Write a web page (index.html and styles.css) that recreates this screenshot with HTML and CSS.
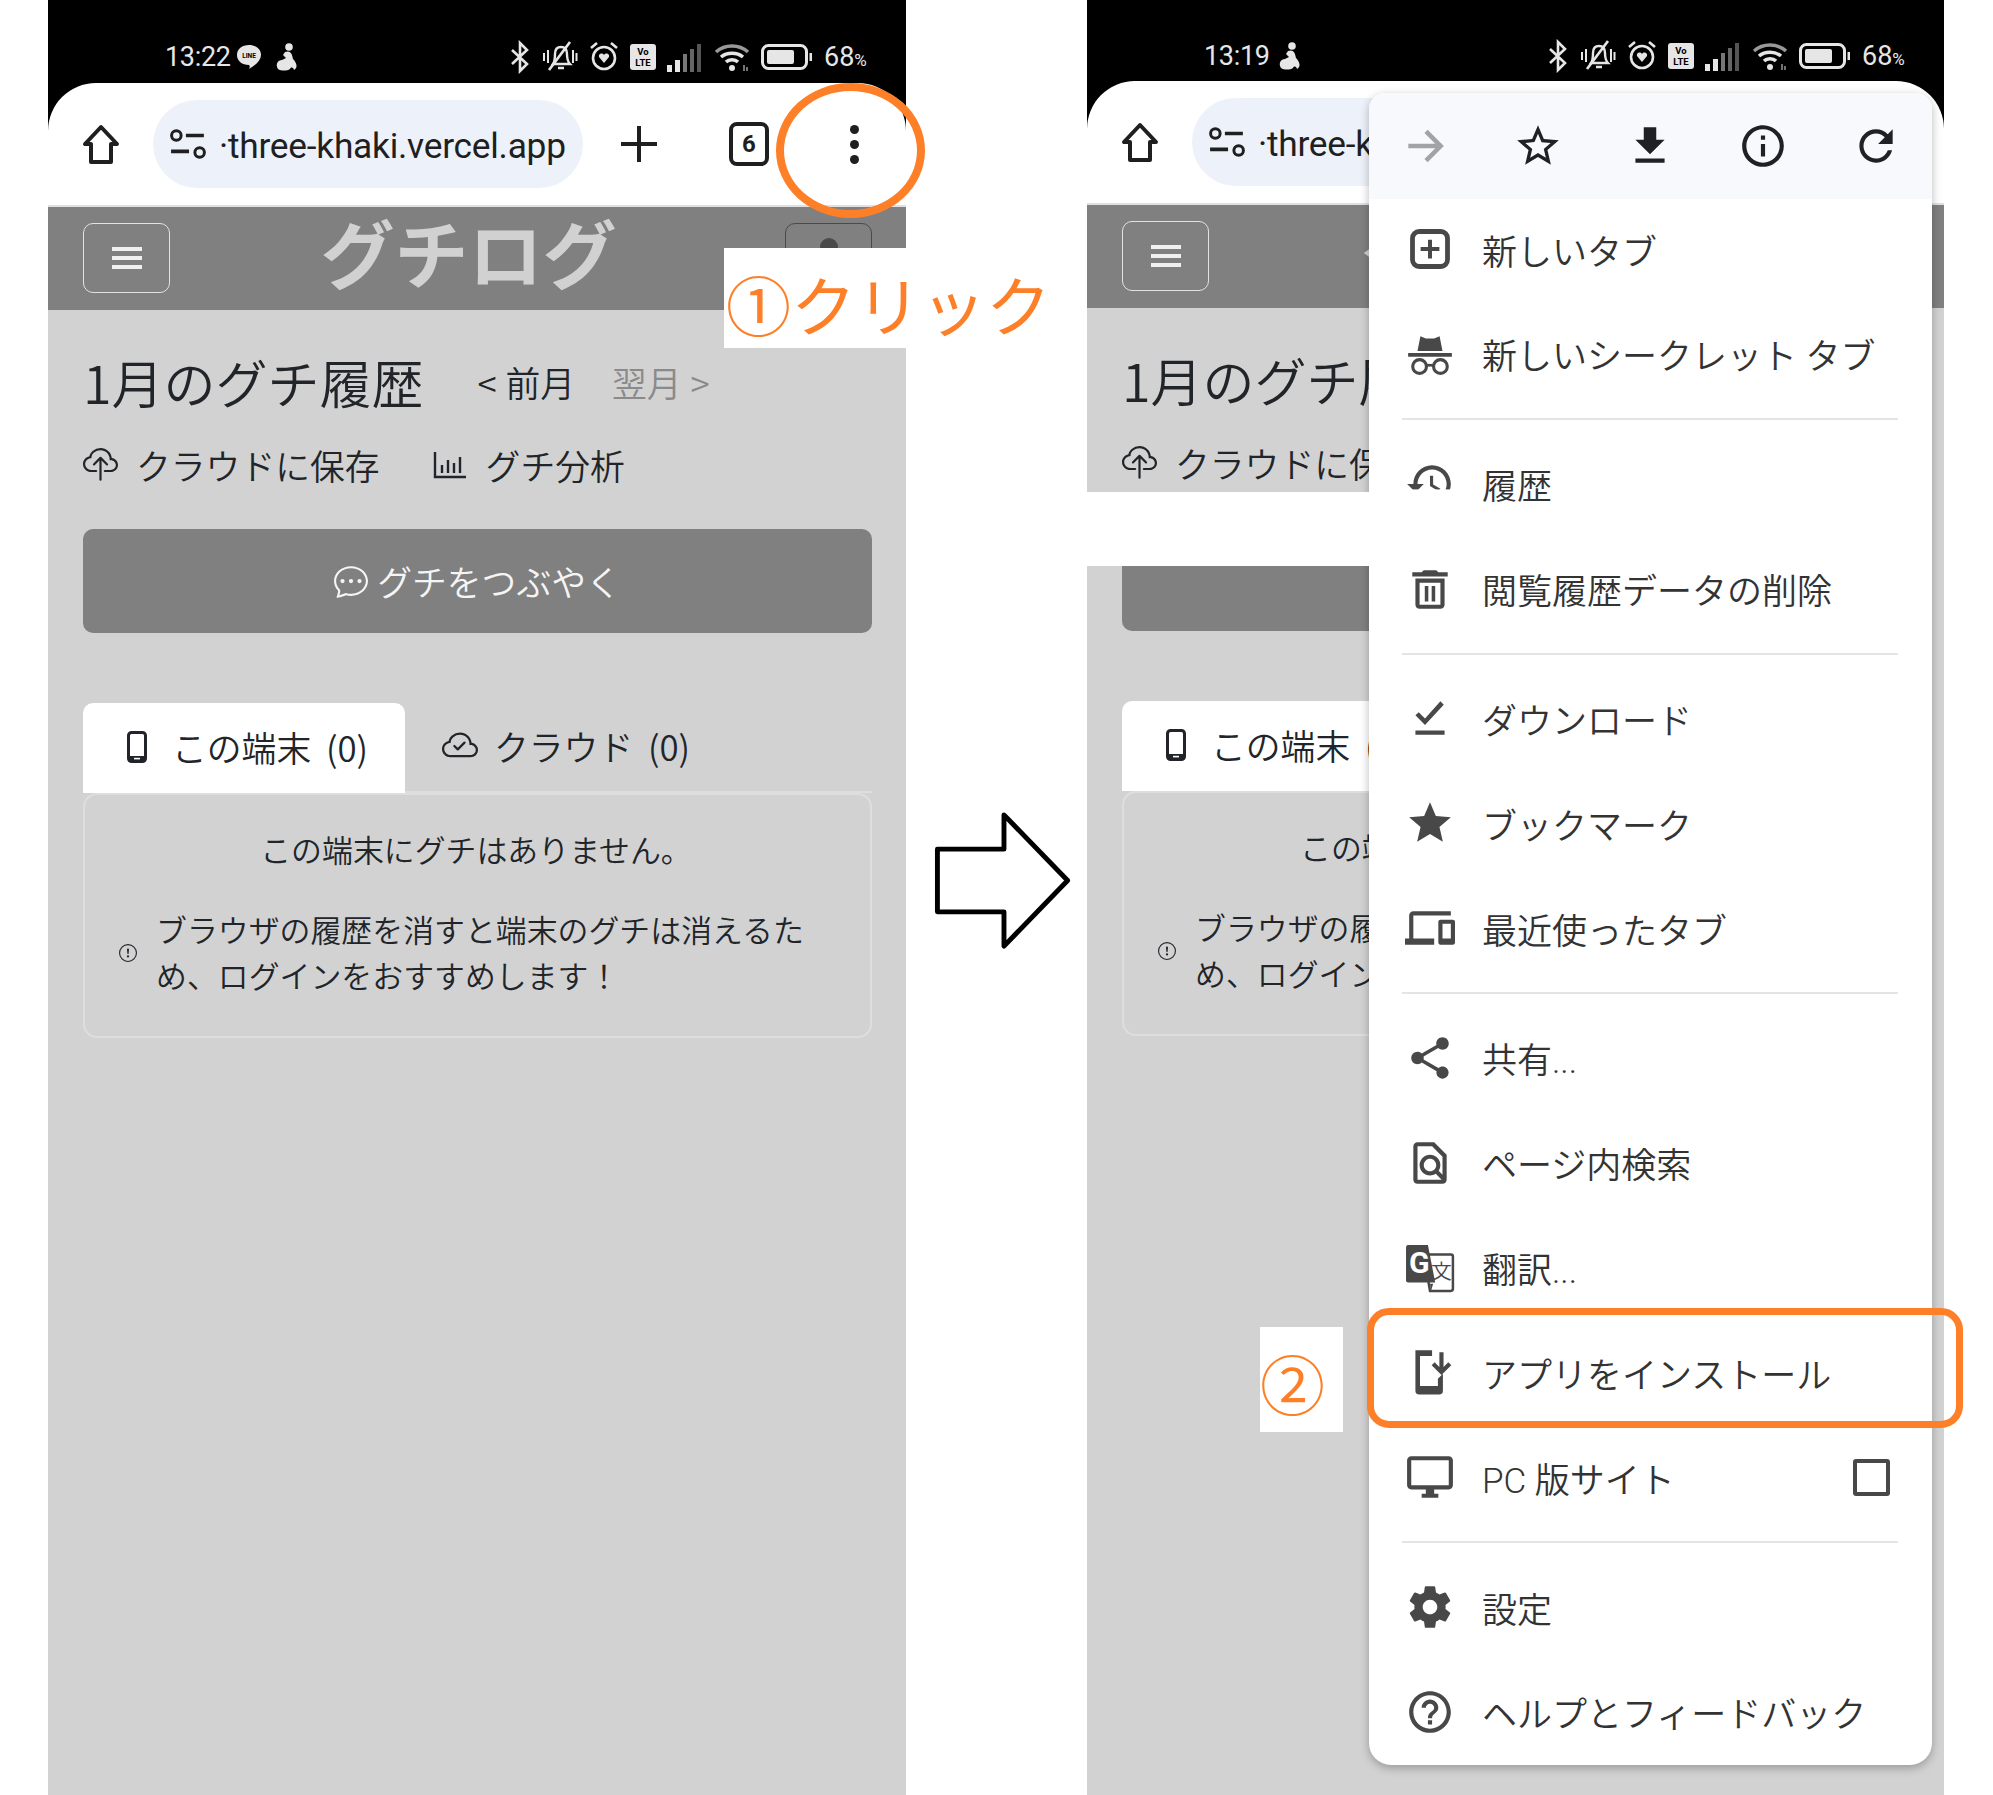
FILE: index.html
```html
<!DOCTYPE html>
<html lang="ja">
    <head>
        <meta charset="UTF-8" />
        <title>グチログ インストール手順</title>
        <link rel="stylesheet" href="styles.css">
    </head>
    <body>
        <svg class="defs" xmlns="http://www.w3.org/2000/svg">
            <!-- status bar -->
            <symbol id="s-bt" viewBox="0 0 22 34"><path d="M3 10l15 14-7 7V3l7 7L3 24" fill="none" stroke="currentColor" stroke-width="2.6"/></symbol>
            <symbol id="s-bell" viewBox="0 0 36 34"><path d="M11 24c2-3 2-6 2-10 0-4 2-7 6-7s6 3 6 7c0 4 0 7 3 10zM16 28h6" fill="none" stroke="currentColor" stroke-width="2.4"/><path d="M7 30L28 2" stroke="currentColor" stroke-width="2.6"/><path d="M2 13v8M6 10v13M31 10v13M34.500 13v8" stroke="currentColor" stroke-width="2"/></symbol>
            <symbol id="s-alarm" viewBox="0 0 30 34"><circle cx="15" cy="18" r="11" fill="none" stroke="currentColor" stroke-width="2.6"/><path d="M2 8l6-5M28 8l-6-5" stroke="currentColor" stroke-width="2.6"/><path d="M15 23l-5-6c-1-3 3-5 5-2 2-3 6-1 5 2z" fill="currentColor"/></symbol>
            <symbol id="s-signal" viewBox="0 0 36 30"><rect x="0" y="23" width="5" height="7" fill="currentColor"/><rect x="8" y="18" width="5" height="12" fill="currentColor"/><rect x="16" y="12" width="4" height="18" fill="#777"/><rect x="23" y="7" width="4" height="23" fill="#666"/><rect x="30" y="2" width="4" height="28" fill="#555"/></symbol>
            <symbol id="s-wifi" viewBox="0 0 36 30"><path d="M2 10c9-8 23-8 32 0" fill="none" stroke="#999" stroke-width="3.500"/><path d="M7 15c6-5 16-5 22 0M12 20c3-3 9-3 12 0" fill="none" stroke="currentColor" stroke-width="3.500"/><circle cx="18" cy="26" r="3" fill="currentColor"/><path d="M30 23v6M33 25v4" stroke="#999" stroke-width="1.500"/></symbol>
            <symbol id="s-batt" viewBox="0 0 52 26"><rect x="1.500" y="1.500" width="44" height="23" rx="6" fill="none" stroke="currentColor" stroke-width="3"/><rect x="6" y="6" width="27" height="14" rx="2" fill="currentColor"/><rect x="48.500" y="9" width="2.500" height="8" fill="currentColor"/></symbol>
            <symbol id="s-figure" viewBox="0 0 24 30"><circle cx="14" cy="5" r="3.800" fill="currentColor"/><path d="M10 10c5-2 7 1 8 7 4 4 5 9 1 11-1-3-3-3-4-1-3 2-9 2-12 0-3-5 0-9 4-9l4-2-3-3z" fill="currentColor"/></symbol>
            <!-- toolbar -->
            <symbol id="t-home" viewBox="0 0 38 40"><path d="M19 3L3 20h6v18h20V20h6z" fill="none" stroke="currentColor" stroke-width="4" stroke-linejoin="round"/></symbol>
            <symbol id="t-tune" viewBox="0 0 34 28"><circle cx="6" cy="6" r="4.500" fill="none" stroke="currentColor" stroke-width="2.800"/><path d="M15 6h17M1 21h17" stroke="currentColor" stroke-width="3.400"/><circle cx="28" cy="22" r="4.500" fill="none" stroke="currentColor" stroke-width="2.800"/></symbol>
            <!-- page -->
            <symbol id="p-menu" viewBox="0 0 30 24"><path d="M0 3h30M0 12h30M0 21h30" stroke="currentColor" stroke-width="4"/></symbol>
            <symbol id="p-person" viewBox="0 0 40 50"><circle cx="20" cy="14" r="9" fill="currentColor"/><path d="M4 46c0-12 8-18 16-18s16 6 16 18z" fill="currentColor"/></symbol>
            <symbol id="p-upload" viewBox="0 0 16 16"><path d="M4.406 1.342A5.53 5.53 0 0 1 8 0c2.69 0 4.923 2 5.166 4.579C14.758 4.804 16 6.137 16 7.773 16 9.569 14.502 11 12.687 11H10a.5.5 0 0 1 0-1h2.688C13.979 10 15 8.988 15 7.773c0-1.216-1.02-2.228-2.313-2.228h-.5v-.5C12.188 2.825 10.328 1 8 1a4.53 4.53 0 0 0-2.941 1.1c-.757.652-1.153 1.438-1.153 2.055v.448l-.445.049C2.064 4.805 1 5.952 1 7.318 1 8.785 2.23 10 3.781 10H6a.5.5 0 0 1 0 1H3.781C1.708 11 0 9.366 0 7.318c0-1.763 1.266-3.223 2.942-3.593.143-.863.698-1.723 1.464-2.383z" fill="currentColor"/><path d="M7.646 4.146a.5.5 0 0 1 .708 0l3 3a.5.5 0 0 1-.708.708L8.500 5.707V14.500a.5.5 0 0 1-1 0V5.707L5.354 7.854a.5.5 0 1 1-.708-.708l3-3z" fill="currentColor"/></symbol>
            <symbol id="p-chart" viewBox="0 0 34 28"><path d="M2 1v25h31" fill="none" stroke="currentColor" stroke-width="2.400"/><path d="M9 14v8M15 9v13M21 12v10M27 6v16" stroke="currentColor" stroke-width="2.400"/></symbol>
            <symbol id="p-chat" viewBox="0 0 16 16"><path d="M5 8a1 1 0 1 1-2 0 1 1 0 0 1 2 0zm4 0a1 1 0 1 1-2 0 1 1 0 0 1 2 0zm3 1a1 1 0 1 0 0-2 1 1 0 0 0 0 2z" fill="currentColor"/><path d="m2.165 15.803.02-.004c1.830-.363 2.948-.842 3.468-1.105A9.060 9.060 0 0 0 8 15c4.418 0 8-3.134 8-7s-3.582-7-8-7-8 3.134-8 7c0 1.760.743 3.370 1.970 4.600a10.437 10.437 0 0 1-.524 2.318l-.003.011a10.722 10.722 0 0 1-.244.637c-.079.186.074.394.273.362a21.673 21.673 0 0 0 .693-.125zm.8-3.108a1 1 0 0 0-.287-.801C1.618 10.830 1 9.468 1 8c0-3.192 3.004-6 7-6s7 2.808 7 6c0 3.193-3.004 6-7 6a8.060 8.060 0 0 1-2.088-.272 1 1 0 0 0-.711.074c-.387.196-1.240.570-2.634.893a10.970 10.970 0 0 0 .398-2z" fill="currentColor"/></symbol>
            <symbol id="p-phone" viewBox="0 0 20 32"><rect x="1.500" y="1.500" width="17" height="29" rx="3" fill="none" stroke="currentColor" stroke-width="3"/><rect x="1.500" y="25" width="17" height="5.500" fill="currentColor"/><rect x="7" y="26.800" width="6" height="1.600" fill="#fff"/></symbol>
            <symbol id="p-cloud" viewBox="0 0 16 16"><path d="M4.406 3.342A5.530 5.530 0 0 1 8 2c2.690 0 4.923 2 5.166 4.579C14.758 6.804 16 8.137 16 9.773 16 11.569 14.502 13 12.687 13H3.781C1.708 13 0 11.366 0 9.318c0-1.763 1.266-3.223 2.942-3.593.143-.863.698-1.723 1.464-2.383zm.653.757c-.757.653-1.153 1.440-1.153 2.056v.448l-.445.049C2.064 6.805 1 7.952 1 9.318 1 10.785 2.230 12 3.781 12h8.906C13.980 12 15 10.988 15 9.773c0-1.216-1.020-2.228-2.313-2.228h-.5v-.5C12.188 4.825 10.328 3 8 3a4.530 4.530 0 0 0-2.941 1.100z" fill="currentColor"/><path d="M10.354 6.146a.5.5 0 0 1 0 .708l-3 3a.5.5 0 0 1-.708 0l-1.500-1.500a.5.5 0 1 1 .708-.708L7 8.793l2.646-2.647a.5.5 0 0 1 .708 0z" fill="currentColor"/></symbol>
            <symbol id="p-alert" viewBox="0 0 16 16"><path d="M8 15A7 7 0 1 1 8 1a7 7 0 0 1 0 14zm0 1A8 8 0 1 0 8 0a8 8 0 0 0 0 16z" fill="currentColor"/><path d="M7.002 11a1 1 0 1 1 2 0 1 1 0 0 1-2 0zM7.100 4.995a.905.905 0 1 1 1.800 0l-.350 3.507a.552.552 0 0 1-1.100 0L7.100 4.995z" fill="currentColor"/></symbol>
            <!-- chrome menu -->
            <symbol id="m-forward" viewBox="0 0 24 24"><path d="M4 12h15M12.500 5l7 7-7 7" fill="none" stroke="currentColor" stroke-width="2.200"/></symbol>
            <symbol id="m-star-o" viewBox="0 0 24 24"><path d="M22 9.240l-7.190-.62L12 2 9.190 8.630 2 9.240l5.460 4.730L5.820 21 12 17.270 18.180 21l-1.630-7.030L22 9.240zM12 15.400l-3.760 2.270 1-4.280-3.320-2.880 4.380-.38L12 6.100l1.710 4.040 4.380.38-3.320 2.880 1 4.280L12 15.400z" fill="currentColor"/></symbol>
            <symbol id="m-download" viewBox="0 0 24 24"><path d="M19 9h-4V3H9v6H5l7 7 7-7zM5 18v2h14v-2H5z" fill="currentColor"/></symbol>
            <symbol id="m-info" viewBox="0 0 24 24"><path d="M11 7h2v2h-2zm0 4h2v6h-2zm1-9C6.480 2 2 6.480 2 12s4.480 10 10 10 10-4.480 10-10S17.520 2 12 2zm0 18c-4.410 0-8-3.590-8-8s3.590-8 8-8 8 3.590 8 8-3.590 8-8 8z" fill="currentColor"/></symbol>
            <symbol id="m-refresh" viewBox="0 0 24 24"><path d="M17.650 6.350C16.200 4.900 14.210 4 12 4c-4.420 0-7.990 3.580-7.990 8s3.570 8 7.990 8c3.730 0 6.840-2.550 7.730-6h-2.080c-.82 2.330-3.040 4-5.650 4-3.310 0-6-2.690-6-6s2.690-6 6-6c1.660 0 3.140.690 4.220 1.780L13 11h7V4l-2.350 2.350z" fill="currentColor"/></symbol>
            <symbol id="m-newtab" viewBox="0 0 24 24"><rect x="3.600" y="3.600" width="16.800" height="16.800" rx="3.200" fill="none" stroke="currentColor" stroke-width="2.300"/><path d="M12 7.500v9M7.500 12h9" stroke="currentColor" stroke-width="1.900"/></symbol>
            <symbol id="m-incognito" viewBox="0 0 24 24"><path d="M6 10.500L7.400 3.500l2.600 1h4l2.600-1 1.400 7z" fill="currentColor"/><path d="M1.500 11.500h21v1.800h-21z" fill="currentColor"/><circle cx="7" cy="18" r="3.300" fill="none" stroke="currentColor" stroke-width="1.500"/><circle cx="17" cy="18" r="3.300" fill="none" stroke="currentColor" stroke-width="1.500"/><path d="M10.200 17.400h3.600" stroke="currentColor" stroke-width="1.300"/></symbol>
            <symbol id="m-history" viewBox="0 0 24 24"><path d="M13 3c-4.970 0-9 4.030-9 9H1l3.890 3.890.07.140L9 12H6c0-3.870 3.130-7 7-7s7 3.130 7 7-3.130 7-7 7c-1.930 0-3.680-.79-4.940-2.060l-1.420 1.420C8.270 19.990 10.510 21 13 21c4.970 0 9-4.030 9-9s-4.030-9-9-9zm-1 5v5l4.280 2.540.72-1.210-3.500-2.080V8H12z" fill="currentColor"/><rect x="0" y="14.600" width="24" height="9.400" fill="#fff"/></symbol>
            <symbol id="m-trash" viewBox="0 0 24 24"><path d="M5 19.500c0 1.100.9 2 2 2h10c1.100 0 2-.9 2-2V7H5v12.500zM7 9h10v10.500H7V9zm9-5l-1-1H9L8 4H3.500v2h17V4H16z" fill="currentColor"/><path d="M9.500 10.500h1.700v7.500H9.500zM12.800 10.500h1.700v7.500h-1.700z" fill="currentColor"/></symbol>
            <symbol id="m-done" viewBox="0 0 24 24"><path d="M5 18h14v2H5v-2zm4.600-2.700L5 10.700l1.600-1.500 3 3L17 4l1.600 1.600-9 9.700z" fill="currentColor"/></symbol>
            <symbol id="m-star" viewBox="0 0 24 24"><path d="M12 17.270L18.180 21l-1.640-7.030L22 9.240l-7.190-.61L12 2 9.190 8.630 2 9.240l5.460 4.730L5.820 21z" fill="currentColor"/></symbol>
            <symbol id="m-devices" viewBox="0 0 24 24"><path d="M4 6h18V4H4c-1.100 0-2 .9-2 2v11H0v3h14v-3H4V6zm19 2h-6c-.55 0-1 .45-1 1v10c0 .55.45 1 1 1h6c.55 0 1-.45 1-1V9c0-.55-.45-1-1-1zm-1 9h-4v-7h4v7z" fill="currentColor"/></symbol>
            <symbol id="m-share" viewBox="0 0 24 24"><path d="M18 16.080c-.76 0-1.440.3-1.960.77L8.910 12.700c.05-.23.09-.46.09-.7s-.04-.47-.09-.7l7.050-4.110c.54.5 1.250.81 2.040.81 1.660 0 3-1.340 3-3s-1.340-3-3-3-3 1.340-3 3c0 .24.04.47.09.7L8.040 9.810C7.500 9.310 6.790 9 6 9c-1.660 0-3 1.340-3 3s1.340 3 3 3c.79 0 1.500-.31 2.040-.81l7.120 4.160c-.05.21-.08.43-.08.65 0 1.610 1.310 2.920 2.920 2.920s2.920-1.310 2.920-2.920-1.310-2.920-2.920-2.920z" fill="currentColor"/></symbol>
            <symbol id="m-find" viewBox="0 0 24 24"><path d="M14 2H6c-1.100 0-1.990.9-1.990 2L4 20c0 1.100.89 2 1.990 2H18c1.100 0 2-.9 2-2V8l-6-6zM6 4h7l5 5v8.580l-1.840-1.840c1.280-1.940 1.070-4.570-.64-6.280C14.550 8.490 13.280 8 12 8c-1.280 0-2.550.49-3.530 1.460-1.950 1.950-1.950 5.110 0 7.050.97.97 2.250 1.460 3.530 1.460.96 0 1.920-.28 2.750-.83L17.600 20H6V4zm8.110 11.100c-.56.56-1.310.88-2.110.88s-1.550-.31-2.110-.88c-.56-.56-.88-1.310-.88-2.110s.31-1.550.88-2.110c.56-.57 1.310-.88 2.110-.88s1.550.31 2.110.88c.56.56.88 1.310.88 2.110s-.31 1.550-.88 2.110z" fill="currentColor"/></symbol>
            <symbol id="m-install" viewBox="0 0 24 24"><path d="M5 1.500h8v2.800H7.200v14.400h8.600v-3.500l2.400-2.400V21a1.800 1.800 0 0 1-1.800 1.800H6.800A1.800 1.800 0 0 1 5 21z" fill="currentColor"/><path d="M17.500 2.500v9.300M13.500 8l4 4 4-4" fill="none" stroke="currentColor" stroke-width="2"/></symbol>
            <symbol id="m-desktop" viewBox="0 0 24 24"><path d="M21 2H3c-1.100 0-2 .9-2 2v12c0 1.100.9 2 2 2h7v2H8v2h8v-2h-2v-2h7c1.100 0 2-.9 2-2V4c0-1.100-.9-2-2-2zm0 14H3V4h18v12z" fill="currentColor"/></symbol>
            <symbol id="m-gear" viewBox="0 0 24 24"><path d="M19.430 12.980c.04-.32.07-.64.07-.98s-.03-.66-.07-.98l2.110-1.650c.19-.15.24-.42.12-.64l-2-3.460c-.12-.22-.39-.3-.61-.22l-2.490 1c-.52-.4-1.080-.73-1.690-.98l-.38-2.650C14.460 2.180 14.250 2 14 2h-4c-.25 0-.46.18-.49.42l-.38 2.650c-.61.25-1.170.59-1.690.98l-2.490-1c-.23-.09-.49 0-.61.22l-2 3.460c-.13.22-.07.49.12.64l2.110 1.650c-.04.32-.07.65-.07.98s.03.66.07.98l-2.110 1.650c-.19.15-.24.42-.12.64l2 3.460c.12.22.39.3.61.22l2.490-1c.52.4 1.080.73 1.690.98l.38 2.650c.03.24.24.42.49.42h4c.25 0 .46-.18.49-.42l.38-2.650c.61-.25 1.170-.59 1.690-.98l2.490 1c.23.09.49 0 .61-.22l2-3.460c.12-.22.07-.49-.12-.64l-2.110-1.650zM12 15.500c-1.930 0-3.500-1.570-3.500-3.500s1.570-3.500 3.500-3.500 3.500 1.570 3.500 3.500-1.570 3.500-3.500 3.500z" fill="currentColor"/></symbol>
            <symbol id="m-help" viewBox="0 0 24 24"><path d="M11 18h2v-2h-2v2zm1-16C6.480 2 2 6.480 2 12s4.480 10 10 10 10-4.480 10-10S17.520 2 12 2zm0 18c-4.410 0-8-3.590-8-8s3.590-8 8-8 8 3.590 8 8-3.590 8-8 8zm0-14c-2.210 0-4 1.790-4 4h2c0-1.100.9-2 2-2s2 .9 2 2c0 2-3 1.750-3 5h2c0-2.250 3-2.500 3-5 0-2.210-1.790-4-4-4z" fill="currentColor"/></symbol>
        </svg>

        <div class="page">
            <!-- step 1 -->
            <section class="phone phone-a">
                <div class="top">
                    <div class="status">
                        <div class="status-left">
                            <span class="clock">13:22</span>
                            <svg class="st st-line" viewBox="0 0 28 28"><path d="M14 2c7 0 12 4 12 10 0 5-5 10-12 14 1-2 1-3 0-4C7 22 2 18 2 12 2 6 7 2 14 2z" fill="currentColor"/><text class="line-text" x="14" y="15" text-anchor="middle">LINE</text></svg>
                            <svg class="st st-figure"><use href="#s-figure" /></svg>
                        </div>
                        <div class="status-right">
                            <svg class="st st-bt"><use href="#s-bt" /></svg>
                            <svg class="st st-bell"><use href="#s-bell" /></svg>
                            <svg class="st st-alarm"><use href="#s-alarm" /></svg>
                            <svg class="st st-volte" viewBox="0 0 26 26"><rect width="26" height="26" rx="3" fill="currentColor"/><text class="volte-text" x="13" y="11" text-anchor="middle">Vo</text><text class="volte-text" x="13" y="22" text-anchor="middle">LTE</text></svg>
                            <svg class="st st-signal"><use href="#s-signal" /></svg>
                            <svg class="st st-wifi"><use href="#s-wifi" /></svg>
                            <svg class="st st-batt"><use href="#s-batt" /></svg>
                            <span class="level">68<small>%</small></span>
                        </div>
                    </div>
                    <div class="toolbar">
                        <svg class="tb-home"><use href="#t-home" /></svg>
                        <div class="url">
                            <svg class="tb-tune"><use href="#t-tune" /></svg>
                            <span class="url-text">·three-khaki.vercel.app</span>
                        </div>
                        <span class="tb-plus"></span>
                        <span class="tb-tabs">6</span>
                        <span class="tb-dots"><i></i><i></i><i></i></span>
                    </div>
                </div>
                <header class="site-head">
                    <button class="head-btn"><svg class="ic-menu"><use href="#p-menu" /></svg></button>
                    <div class="site-title">グチログ</div>
                    <button class="head-btn head-user"><svg class="ic-person"><use href="#p-person" /></svg></button>
                </header>
                <main class="content">
                    <div class="month-row">
                        <h1>1月のグチ履歴</h1>
                        <a class="month-prev">&lt; 前月</a>
                        <a class="month-next">翌月 &gt;</a>
                    </div>
                    <div class="tool-row">
                        <svg class="ic-upload"><use href="#p-upload" /></svg>
                        <span>クラウドに保存</span>
                        <svg class="ic-chart"><use href="#p-chart" /></svg>
                        <span>グチ分析</span>
                    </div>
                    <div class="post-btn">
                        <svg class="ic-chat"><use href="#p-chat" /></svg>
                        <span>グチをつぶやく</span>
                    </div>
                    <div class="tabs">
                        <div class="tab tab-on">
                            <svg class="ic-phone"><use href="#p-phone" /></svg>
                            <span>この端末 (0)</span>
                        </div>
                        <div class="tab">
                            <svg class="ic-cloud"><use href="#p-cloud" /></svg>
                            <span>クラウド (0)</span>
                        </div>
                    </div>
                    <div class="card">
                        <p class="card-empty">この端末にグチはありません。</p>
                        <div class="card-note">
                            <svg class="ic-alert"><use href="#p-alert" /></svg>
                            <p>ブラウザの履歴を消すと端末のグチは消えるため、ログインをおすすめします！</p>
                        </div>
                    </div>
                </main>
            </section>

            <!-- step 2: only what the open menu leaves visible -->
            <section class="phone phone-b">
                <div class="top">
                    <div class="status">
                        <div class="status-left">
                            <span class="clock">13:19</span>
                            <svg class="st st-figure st-figure-b"><use href="#s-figure" /></svg>
                        </div>
                        <div class="status-right">
                            <svg class="st st-bt"><use href="#s-bt" /></svg>
                            <svg class="st st-bell"><use href="#s-bell" /></svg>
                            <svg class="st st-alarm"><use href="#s-alarm" /></svg>
                            <svg class="st st-volte" viewBox="0 0 26 26"><rect width="26" height="26" rx="3" fill="currentColor"/><text class="volte-text" x="13" y="11" text-anchor="middle">Vo</text><text class="volte-text" x="13" y="22" text-anchor="middle">LTE</text></svg>
                            <svg class="st st-signal"><use href="#s-signal" /></svg>
                            <svg class="st st-wifi"><use href="#s-wifi" /></svg>
                            <svg class="st st-batt"><use href="#s-batt" /></svg>
                            <span class="level">68<small>%</small></span>
                        </div>
                    </div>
                    <div class="toolbar">
                        <svg class="tb-home"><use href="#t-home" /></svg>
                        <div class="url">
                            <svg class="tb-tune"><use href="#t-tune" /></svg>
                            <span class="url-text">·three-k</span>
                        </div>
                    </div>
                </div>
                <header class="site-head">
                    <button class="head-btn"><svg class="ic-menu"><use href="#p-menu" /></svg></button>
                    <div class="site-title">グ</div>
                </header>
                <main class="content">
                    <div class="month-row">
                        <h1>1月のグチ履</h1>
                    </div>
                    <div class="tool-row">
                        <svg class="ic-upload"><use href="#p-upload" /></svg>
                        <span>クラウドに保</span>
                    </div>
                    <div class="post-btn"></div>
                    <div class="tabs">
                        <div class="tab tab-on">
                            <svg class="ic-phone"><use href="#p-phone" /></svg>
                            <span>この端末 (</span>
                        </div>
                    </div>
                    <div class="card">
                        <p class="card-empty">この端</p>
                        <div class="card-note">
                            <svg class="ic-alert"><use href="#p-alert" /></svg>
                            <p>ブラウザの履<br />め、ログイン</p>
                        </div>
                    </div>
                </main>

                <nav class="menu">
                    <div class="menu-top">
                        <svg class="mi mi-grey"><use href="#m-forward" /></svg>
                        <svg class="mi"><use href="#m-star-o" /></svg>
                        <svg class="mi"><use href="#m-download" /></svg>
                        <svg class="mi"><use href="#m-info" /></svg>
                        <svg class="mi"><use href="#m-refresh" /></svg>
                    </div>
                    <a class="menu-row"><svg class="mi"><use href="#m-newtab" /></svg>新しいタブ</a>
                    <a class="menu-row"><svg class="mi"><use href="#m-incognito" /></svg>新しいシークレット タブ</a>
                    <div class="menu-sep"></div>
                    <a class="menu-row"><svg class="mi"><use href="#m-history" /></svg>履歴</a>
                    <a class="menu-row"><svg class="mi"><use href="#m-trash" /></svg>閲覧履歴データの削除</a>
                    <div class="menu-sep"></div>
                    <a class="menu-row"><svg class="mi"><use href="#m-done" /></svg>ダウンロード</a>
                    <a class="menu-row"><svg class="mi"><use href="#m-star" /></svg>ブックマーク</a>
                    <a class="menu-row"><svg class="mi"><use href="#m-devices" /></svg>最近使ったタブ</a>
                    <div class="menu-sep"></div>
                    <a class="menu-row"><svg class="mi"><use href="#m-share" /></svg>共有...</a>
                    <a class="menu-row"><svg class="mi"><use href="#m-find" /></svg>ページ内検索</a>
                    <a class="menu-row">
                        <svg class="mi" viewBox="0 0 24 24">
                            <path d="M9 5.500h13a1 1 0 0 1 1 1V22a1 1 0 0 1-1 1H12L9 5.500z" fill="#fff" stroke="currentColor" stroke-width="1.200"/>
                            <path d="M12.500 23l1-3.500-1.500 0z" fill="currentColor"/>
                            <path d="M1.500 1h9.500l3.500 18H1.500a1 1 0 0 1-1-1V2a1 1 0 0 1 1-1z" fill="currentColor"/>
                            <text class="translate-g" x="6.800" y="14.500">G</text>
                            <text class="translate-k" x="12.500" y="17.500">文</text>
                        </svg>
                        翻訳...
                    </a>
                    <a class="menu-row"><svg class="mi"><use href="#m-install" /></svg>アプリをインストール</a>
                    <a class="menu-row"><svg class="mi"><use href="#m-desktop" /></svg>PC 版サイト<span class="menu-check"></span></a>
                    <div class="menu-sep"></div>
                    <a class="menu-row"><svg class="mi"><use href="#m-gear" /></svg>設定</a>
                    <a class="menu-row"><svg class="mi"><use href="#m-help" /></svg>ヘルプとフィードバック</a>
                </nav>
            </section>

            <!-- annotations drawn over the screenshots -->
            <div class="mark-ring"></div>
            <div class="mark-step1">①クリック</div>
            <svg class="mark-arrow" viewBox="0 0 140 142"><path d="M3 39h68V4l65 67-65 67V103H3z" fill="#fff" stroke="#000" stroke-width="5" stroke-linejoin="round"/></svg>
            <div class="mark-strip"></div>
            <div class="mark-step2">②</div>
            <div class="mark-frame"></div>
        </div>
    </body>
</html>
```

FILE: styles.css
```css
body {
    margin: 0;
    background: #fff;
    font-family: 'Noto Sans CJK JP', 'Noto Sans', sans-serif;
    color: #212529;
    font-weight: 350;
}

h1,
p {
    margin: 0;
    font-weight: 350;
}

.defs {
    position: absolute;
    width: 0;
    height: 0;
}

.page {
    position: relative;
    display: flex;
    height: 1795px;
    overflow: hidden;
    padding-left: 48px;
    gap: 181px;
}

.phone {
    position: relative;
    flex: none;
    width: 858px;
    background: #d2d2d2;
    overflow: hidden;
}

.phone-b {
    width: 857px;
}

/* status bar */
.top {
    background: #000;
}

.status {
    display: flex;
    align-items: center;
    justify-content: space-between;
    height: 83px;
    padding: 30px 40px 0 117px;
    box-sizing: border-box;
    color: #e6e6e6;
    font-family: Roboto, sans-serif;
    font-weight: 400;
}

.phone-b .status {
    height: 81px;
    padding-top: 30px;
}

.status-left,
.status-right {
    display: flex;
    align-items: center;
}

.status-right {
    gap: 11px;
}

.clock {
    font-size: 27px;
    letter-spacing: -0.3px;
}

.level {
    font-size: 27px;
    width: 42px;
    white-space: nowrap;
}

.level small {
    font-size: 17px;
}

.st {
    color: #e6e6e6;
}

.st-line {
    width: 28px;
    height: 28px;
    margin-left: 4px;
}

.st-figure {
    width: 24px;
    height: 30px;
    margin-left: 12px;
}

.st-figure-b {
    margin-left: 8px;
}

.st-bt {
    width: 22px;
    height: 34px;
}

.st-bell {
    width: 36px;
    height: 34px;
}

.st-alarm {
    width: 30px;
    height: 34px;
}

.st-volte {
    width: 26px;
    height: 26px;
}

.st-signal {
    width: 36px;
    height: 30px;
}

.st-wifi {
    width: 36px;
    height: 30px;
}

.st-batt {
    width: 52px;
    height: 26px;
}

.volte-text {
    font-family: Roboto, sans-serif;
    font-size: 9.5px;
    font-weight: 700;
    fill: #000;
}

.line-text {
    font-family: Roboto, sans-serif;
    font-size: 6.5px;
    font-weight: 700;
    fill: #000;
}

/* browser toolbar */
.toolbar {
    display: grid;
    grid-template-columns: 105px 430px 112px 108px 1fr;
    align-items: center;
    justify-items: center;
    height: 122px;
    background: #fff;
    border-radius: 48px 48px 0 0;
    border-bottom: 2px solid #e0e0e0;
    color: #1f1f1f;
}

.tb-home {
    width: 38px;
    height: 40px;
}

.url {
    justify-self: stretch;
    display: flex;
    align-items: center;
    height: 88px;
    border-radius: 44px;
    background: #edf2fa;
    padding-left: 17px;
    overflow: hidden;
}

.tb-tune {
    flex: none;
    width: 36px;
    height: 30px;
}

.url-text {
    font-family: Roboto, sans-serif;
    font-weight: 400;
    font-size: 35.300px;
    margin: 4px 0 0 13px;
    white-space: nowrap;
    letter-spacing: -0.25px;
}

.tb-plus {
    width: 36px;
    height: 36px;
    background:
        linear-gradient(#1f1f1f, #1f1f1f) center / 100% 4px no-repeat,
        linear-gradient(#1f1f1f, #1f1f1f) center / 4px 100% no-repeat;
}

.tb-tabs {
    display: flex;
    align-items: center;
    justify-content: center;
    width: 32px;
    height: 32px;
    padding: 2px 0;
    border: 4px solid #1f1f1f;
    border-radius: 8px;
    font-family: Roboto, sans-serif;
    font-size: 24px;
    font-weight: 700;
}

.tb-dots {
    display: flex;
    flex-direction: column;
    gap: 6px;
}

.tb-dots i {
    width: 9px;
    height: 9px;
    border-radius: 50%;
    background: #1f1f1f;
}

/* site header */
.site-head {
    display: flex;
    align-items: center;
    justify-content: space-between;
    height: 103px;
    padding: 0 34px 0 35px;
    background: #808080;
}

.head-btn {
    display: flex;
    align-items: center;
    justify-content: center;
    flex: none;
    width: 87px;
    height: 70px;
    margin-top: -2px;
    padding: 0;
    background: none;
    border: 1.5px solid #e2e2e2;
    border-radius: 10px;
    color: #f0f0f0;
}

.head-user {
    border-color: #4a4a4a;
    color: #4a4a4a;
}

.ic-menu {
    width: 30px;
    height: 24px;
}

.ic-person {
    width: 40px;
    height: 50px;
}

.site-title {
    flex: 1;
    padding-right: 18px;
    text-align: center;
    font-size: 74px;
    font-weight: 700;
    line-height: 1;
    margin-top: -16px;
    color: #d1d1d1;
    white-space: nowrap;
}

.phone-b .site-title {
    padding: 0 0 0 152px;
    text-align: left;
}

/* page body */
.content {
    padding: 41px 34px 0 35px;
    font-size: 34.800px;
}

.month-row {
    display: flex;
    align-items: center;
    white-space: nowrap;
}

.month-row h1 {
    font-size: 52px;
    line-height: 62px;
}

.month-prev {
    margin-left: 54px;
    word-spacing: 1px;
}

.month-next {
    margin-left: 37px;
    word-spacing: 1px;
    color: #8a8a8a;
}

.tool-row {
    display: flex;
    align-items: center;
    height: 50px;
    margin-top: 27px;
    white-space: nowrap;
}

.ic-upload {
    width: 35px;
    height: 35px;
    margin-right: 18px;
}

.ic-chart {
    width: 34px;
    height: 28px;
    margin: 0 19px 0 53px;
}

.post-btn {
    display: flex;
    align-items: center;
    justify-content: center;
    gap: 9px;
    height: 104px;
    margin-top: 39px;
    border-radius: 10px;
    background: #808080;
    color: #f5f5f5;
}

.ic-chat {
    width: 34px;
    height: 34px;
}

.tabs {
    display: flex;
    height: 90px;
    margin-top: 70px;
    border-bottom: 2px solid #dedede;
    box-sizing: border-box;
}

.tab {
    display: flex;
    align-items: center;
    height: 86px;
    padding: 0 0 0 37px;
    white-space: nowrap;
    word-spacing: 7px;
}

.tab-on {
    width: 322px;
    height: 90px;
    box-sizing: border-box;
    padding: 0 0 3px 44px;
    background: #fff;
    border-radius: 10px 10px 0 0;
}

.ic-phone {
    width: 20px;
    height: 32px;
    margin-right: 25px;
}

.ic-cloud {
    width: 36px;
    height: 36px;
    margin-right: 16px;
}

.card {
    height: 245px;
    margin-top: 0;
    box-sizing: border-box;
    border: 2px solid #dedede;
    border-radius: 14px;
    padding-top: 31px;
    font-size: 30.900px;
    line-height: 46px;
}

.card-empty {
    text-align: center;
    padding-right: 3px;
}

.phone-b .card-empty {
    padding: 0 0 0 176px;
    text-align: left;
}

.card-note {
    display: flex;
    align-items: center;
    gap: 19px;
    margin-top: 34px;
    padding-left: 34px;
}

.card-note p {
    width: 670px;
}

.ic-alert {
    flex: none;
    width: 18px;
    height: 18px;
    margin-top: 2px;
}

/* chrome menu */
.menu {
    position: absolute;
    left: 282px;
    top: 93px;
    width: 563px;
    height: 1672px;
    background: #fff;
    border-radius: 16px 16px 22px 22px;
    box-shadow: 0 3px 10px rgba(0, 0, 0, 0.28);
    color: #333;
    font-family: Roboto, 'Noto Sans CJK JP', sans-serif;
    font-size: 35px;
    font-weight: 350;
    overflow: hidden;
}

.menu-top {
    display: grid;
    grid-template-columns: repeat(5, 1fr);
    justify-items: center;
    align-items: center;
    height: 106px;
    margin-bottom: -2.300px;
    background: #f8f9fc;
}

.mi {
    flex: none;
    width: 50px;
    height: 50px;
    color: #484848;
}

.menu-top .mi {
    color: #202124;
}

.menu-top .mi-grey {
    color: #a0a3a8;
}

.menu-row {
    display: flex;
    align-items: center;
    gap: 27px;
    height: 104.830px;
    padding-left: 36px;
    white-space: nowrap;
}

.menu-sep {
    height: 2px;
    margin: 11.500px 34px 11.500px 33px;
    background: #e4e4e4;
}

.menu-check {
    width: 29px;
    height: 29px;
    margin-left: auto;
    margin-right: 42px;
    border: 4px solid #484848;
    border-radius: 3px;
}

.translate-g {
    font-family: Roboto, sans-serif;
    font-size: 14.500px;
    font-weight: 700;
    fill: #fff;
    text-anchor: middle;
}

.translate-k {
    font-family: 'Noto Sans CJK JP', sans-serif;
    font-size: 10px;
    fill: #484848;
}

/* annotations */
.mark-ring {
    position: absolute;
    left: 776px;
    top: 83px;
    width: 149px;
    height: 135px;
    box-sizing: border-box;
    border: 8px solid #fd7f28;
    border-radius: 50%;
}

.mark-step1 {
    position: absolute;
    left: 724px;
    top: 248px;
    width: 182px;
    height: 100px;
    padding: 5px 0 0 2px;
    box-sizing: border-box;
    background: #fff;
    color: #fd7f28;
    font-size: 65px;
    font-weight: 400;
    line-height: 100px;
    white-space: nowrap;
}

.mark-arrow {
    position: absolute;
    left: 934px;
    top: 811px;
    width: 138px;
    height: 139px;
}

.mark-strip {
    position: absolute;
    left: 1087px;
    top: 492px;
    width: 282px;
    height: 74px;
    background: #fff;
}

.mark-step2 {
    position: absolute;
    left: 1260px;
    top: 1327px;
    width: 83px;
    height: 105px;
    padding-top: 5px;
    box-sizing: border-box;
    background: #fff;
    color: #fd7f28;
    font-size: 65px;
    font-weight: 350;
    line-height: 100px;
    white-space: nowrap;
}

.mark-frame {
    position: absolute;
    left: 1367px;
    top: 1308px;
    width: 596px;
    height: 120px;
    box-sizing: border-box;
    border: 7px solid #fd7f28;
    border-radius: 22px;
}
```
